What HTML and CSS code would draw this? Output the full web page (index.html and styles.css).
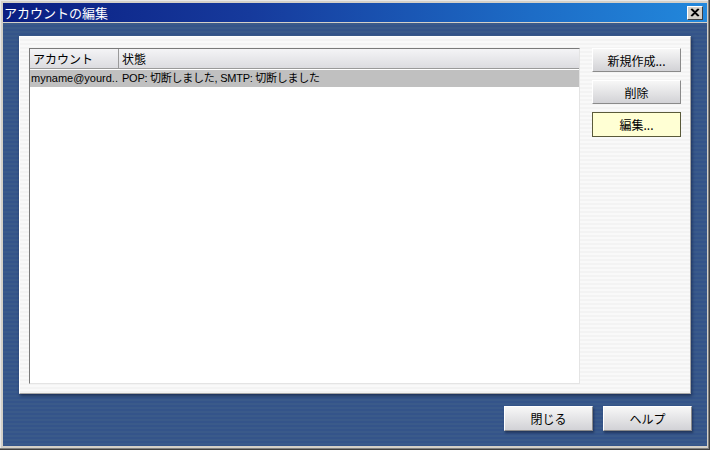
FILE: index.html
```html
<!DOCTYPE html>
<html lang="ja">
<head>
<meta charset="utf-8">
<title>アカウントの編集</title>
<link rel="stylesheet" href="styles.css">
</head>
<body>
<div class="window">
  <div class="titlebar">
    <span class="title">アカウントの編集</span>
    <span class="close">
      <svg width="10" height="9" viewBox="0 0 10 9"><path d="M1 1 L8 8 M2 1 L9 8 M8 1 L1 8 M9 1 L2 8" stroke="#000" stroke-width="1.2" fill="none"/></svg>
    </span>
  </div>
  <div class="content">
    <div class="panel">
      <div class="list">
        <div class="list-head">
          <div class="col c1">アカウント</div>
          <div class="col c2">状態</div>
        </div>
        <div class="list-row selected">
          <div class="cell c1">myname@yourd..</div>
          <div class="cell c2">POP: 切断しました, SMTP: 切断しました</div>
        </div>
      </div>
      <div class="side">
        <button class="btn side-btn">新規作成...</button>
        <button class="btn side-btn">削除</button>
        <button class="btn side-btn focus">編集...</button>
      </div>
    </div>
    <div class="footer">
      <button class="btn foot-btn">閉じる</button>
      <button class="btn foot-btn">ヘルプ</button>
    </div>
  </div>
</div>
</body>
</html>
```

FILE: styles.css
```css
html, body {
  margin: 0;
  padding: 0;
}
body {
  width: 710px;
  height: 450px;
  overflow: hidden;
  font-family: "Liberation Sans", "Noto Sans CJK JP", sans-serif;
  font-size: 12px;
  color: #000;
}
.window {
  width: 710px;
  height: 450px;
  box-sizing: border-box;
  background: #d4d0c8;
  padding: 3px 3px 4px 3px;
  display: flex;
  flex-direction: column;
  box-shadow: inset -1px -1px #404040, inset -2px -2px #808080, inset 1px 1px #e8e8e8;
}
.titlebar {
  height: 19px;
  flex: none;
  display: flex;
  align-items: center;
  justify-content: space-between;
  background: linear-gradient(to right, #0a1e82 0%, #163a9c 35%, #1d6cc6 75%, #2288dc 100%);
}
.title {
  color: #fff;
  font-size: 13px;
  padding-left: 1px;
  line-height: 19px;
  font-family: "Noto Sans CJK JP", sans-serif;
}
.close {
  width: 14px;
  height: 12px;
  margin-right: 4px;
  background: #d4d0c8;
  border: 1px solid;
  border-color: #fff #404040 #404040 #fff;
  display: flex;
  align-items: center;
  justify-content: center;
}
.content {
  flex: 1;
  margin-top: 1px;
  background: repeating-linear-gradient(to bottom, #3a5a8a 0px, #3a5a8a 2px, #34548a 2px, #34548a 4px);
  padding: 13px 15px 0 16px;
  display: flex;
  flex-direction: column;
}
.panel {
  width: 672px;
  height: 358px;
  box-sizing: border-box;
  background: repeating-linear-gradient(to bottom, #f9f9f9 0px, #f9f9f9 2px, #f3f3f3 2px, #f3f3f3 4px);
  border: 1px solid;
  border-color: #ffffff #a8a8a8 #a8a8a8 #ffffff;
  box-shadow: 1px 2px 3px rgba(10, 20, 50, 0.55);
  padding: 11px 9px 0 9px;
  display: flex;
  gap: 12px;
}
.list {
  width: 551px;
  height: 336px;
  box-sizing: border-box;
  background: #fff;
  border: 1px solid;
  border-color: #7a7a7a #e4e4e4 #e4e4e4 #7a7a7a;
}
.list-head {
  display: flex;
  height: 20px;
  box-sizing: border-box;
  background: linear-gradient(to bottom, #f4f4f6, #dcdce0);
  border-bottom: 1px solid #9a9a9a;
}
.col {
  line-height: 19px;
  font-size: 12px;
  padding-left: 3px;
  font-family: "Noto Sans CJK JP", sans-serif;
  box-sizing: border-box;
}
.col.c1 {
  width: 89px;
  border-right: 1px solid #9a9a9a;
}
.col.c2 {
  flex: 1;
  padding-left: 3px;
}
.list-row {
  display: flex;
  height: 17px;
  margin-top: 1px;
}
.list-row.selected {
  background: #c0c0c0;
}
.cell {
  font-size: 11px;
  line-height: 17px;
  white-space: nowrap;
}
.cell.c1 {
  width: 89px;
  padding-left: 1px;
  box-sizing: border-box;
}
.cell.c2 {
  padding-left: 3px;
  letter-spacing: -0.25px;
}
.side {
  display: flex;
  flex-direction: column;
  gap: 8px;
}
.btn {
  font-family: "Noto Sans CJK JP", sans-serif;
  font-size: 12px;
  color: #000;
  background: linear-gradient(to bottom, #f7f7f7, #d2d2d6);
  border: 1px solid;
  border-color: #ffffff #8a8a8a #8a8a8a #ffffff;
  padding: 0;
  margin: 0;
  box-sizing: border-box;
}
.side-btn {
  width: 89px;
  height: 24px;
}
.side-btn.focus {
  height: 25px;
  background: #ffffd4;
  border-color: #5a5a3a;
}
.footer {
  display: flex;
  justify-content: flex-end;
  gap: 10px;
  margin-top: 12px;
}
.foot-btn {
  width: 89px;
  height: 25px;
  box-shadow: 1px 2px 2px rgba(10, 20, 50, 0.5);
}
```
